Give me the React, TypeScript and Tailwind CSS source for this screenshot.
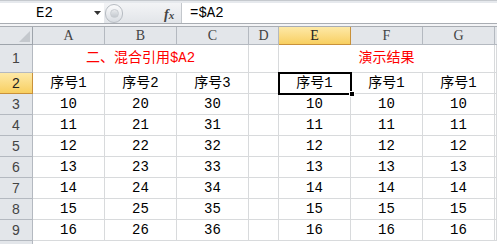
import React from "react";

const cols = ["A", "B", "C", "D", "E", "F", "G"];
const dataRows: [number, number, number][] = [
  [10, 20, 30],
  [11, 21, 31],
  [12, 22, 32],
  [13, 23, 33],
  [14, 24, 34],
  [15, 25, 35],
  [16, 26, 36],
];

const mono = { fontFamily: '"Liberation Mono", "Noto Sans CJK SC", monospace' };
const cjk = { fontFamily: '"Liberation Mono", "Noto Sans CJK SC", monospace' };

function RowHead({ n, sel, h }: { n: string; sel?: boolean; h: string }) {
  return (
    <div
      className={`${h} flex items-center justify-center border-b border-r text-[14px] ${
        sel
          ? "bg-gradient-to-b from-[#fde9a6] to-[#f8cf5f] border-[#c9913a] text-[#222]"
          : "bg-[#e3e6ea] border-[#b4b9c0] text-[#444]"
      }`}
      style={{ fontFamily: '"Liberation Sans", sans-serif' }}
    >
      {n}
    </div>
  );
}

function Cell({ children, h, red, className = "" }: { children?: React.ReactNode; h: string; red?: boolean; className?: string }) {
  return (
    <div
      className={`${h} flex items-center justify-center border-b border-r border-[#d8dadc] text-[14px] ${
        red ? "text-[#ff0000]" : "text-black"
      } ${className}`}
      style={cjk}
    >
      {children}
    </div>
  );
}

export default function App() {
  return (
    <div className="w-[497px] h-[244px] overflow-hidden bg-white">
      {/* formula bar */}
      <div className="h-[3px] bg-[#e6e9ed] border-t border-[#c5c9ce]" />
      <div className="flex h-[20px] bg-[#e6e9ed]">
        <div className="relative w-[104px] h-full bg-white flex items-center">
          <span className="ml-[36px] text-[14px] text-black" style={mono}>
            E2
          </span>
          <svg className="absolute left-[94px] top-[8px]" width="7" height="4" viewBox="0 0 7 4">
            <path d="M0 0 H7 L3.5 4 Z" fill="#333" />
          </svg>
        </div>
        <div className="w-[77px] h-full flex items-center bg-gradient-to-b from-[#f3f4f6] to-[#e2e5e9] relative">
          <div className="ml-[1px] w-[18px] h-[19px] rounded-full border border-[#b7bcc2] bg-gradient-to-b from-[#fbfbfc] to-[#d9dde2] flex items-center justify-center">
            <div className="w-[9px] h-[9px] rounded-full bg-gradient-to-b from-[#e8eaed] to-[#c3c8ce] border border-[#c8ccd1]" />
          </div>
          <span
            className="absolute left-[60px] top-[1px] text-[14px] italic font-bold text-[#444]"
            style={{ fontFamily: '"Liberation Serif", serif' }}
          >
            f<span className="text-[11px]">x</span>
          </span>
        </div>
        <div className="flex-1 h-full bg-white border-l border-[#c3c7cc] flex items-center">
          <span className="ml-[8px] text-[14px] text-black" style={mono}>
            =$A2
          </span>
        </div>
      </div>
      <div className="h-[1px] bg-[#a9adb3]" />
      <div className="h-[2px] bg-[#f3f4f6]" />
      <div className="h-[1px] bg-[#a9adb3]" />

      {/* sheet grid */}
      <div className="grid grid-cols-[33px_72px_72px_72px_30px_72px_72px_72px_1fr]">
        {/* corner */}
        <div className="h-[18px] relative bg-[#e3e6ea] border-b border-r border-[#9ea4ab]">
          <svg className="absolute right-[2px] bottom-[2px]" width="11" height="11" viewBox="0 0 11 11">
            <path d="M11 0 V11 H0 Z" fill="#c4c8cd" />
          </svg>
        </div>
        {cols.map((c) => (
          <div
            key={c}
            className={`h-[18px] flex items-center justify-center border-b border-r text-[14px] ${
              c === "E"
                ? "bg-gradient-to-b from-[#fde9a6] to-[#f8cf5f] border-[#c9913a] text-[#222]"
                : "bg-[#e3e6ea] border-[#b4b9c0] text-[#444]"
            }`}
            style={{ fontFamily: '"Liberation Serif", serif' }}
          >
            {c}
          </div>
        ))}
        <div className="h-[18px] bg-[#e3e6ea] border-b border-[#b4b9c0]" />

        {/* row 1 */}
        <RowHead n="1" h="h-[28px]" />
        <Cell h="h-[28px]" red className="col-span-3">
          二、混合引用$A2
        </Cell>
        <Cell h="h-[28px]" />
        <Cell h="h-[28px]" red className="col-span-3">
          演示结果
        </Cell>
        <Cell h="h-[28px]" />

        {/* row 2 */}
        <RowHead n="2" h="h-[21px]" sel />
        <Cell h="h-[21px]">序号1</Cell>
        <Cell h="h-[21px]">序号2</Cell>
        <Cell h="h-[21px]">序号3</Cell>
        <Cell h="h-[21px]" />
        <Cell h="h-[21px]" className="relative">
          序号1
          <div className="absolute left-[-1px] top-[-1px] w-[74px] h-[23px] border-2 border-black" />
          <div className="absolute left-[70px] top-[18px] w-[6px] h-[6px] bg-black border border-white" />
        </Cell>
        <Cell h="h-[21px]">序号1</Cell>
        <Cell h="h-[21px]">序号1</Cell>
        <Cell h="h-[21px]" />

        {dataRows.map((r, i) => (
          <React.Fragment key={i}>
            <RowHead n={String(i + 3)} h="h-[21px]" />
            <Cell h="h-[21px]">{r[0]}</Cell>
            <Cell h="h-[21px]">{r[1]}</Cell>
            <Cell h="h-[21px]">{r[2]}</Cell>
            <Cell h="h-[21px]" />
            <Cell h="h-[21px]">{r[0]}</Cell>
            <Cell h="h-[21px]">{r[0]}</Cell>
            <Cell h="h-[21px]">{r[0]}</Cell>
            <Cell h="h-[21px]" />
          </React.Fragment>
        ))}
        <RowHead n="" h="h-[21px]" />
      </div>
    </div>
  );
}
